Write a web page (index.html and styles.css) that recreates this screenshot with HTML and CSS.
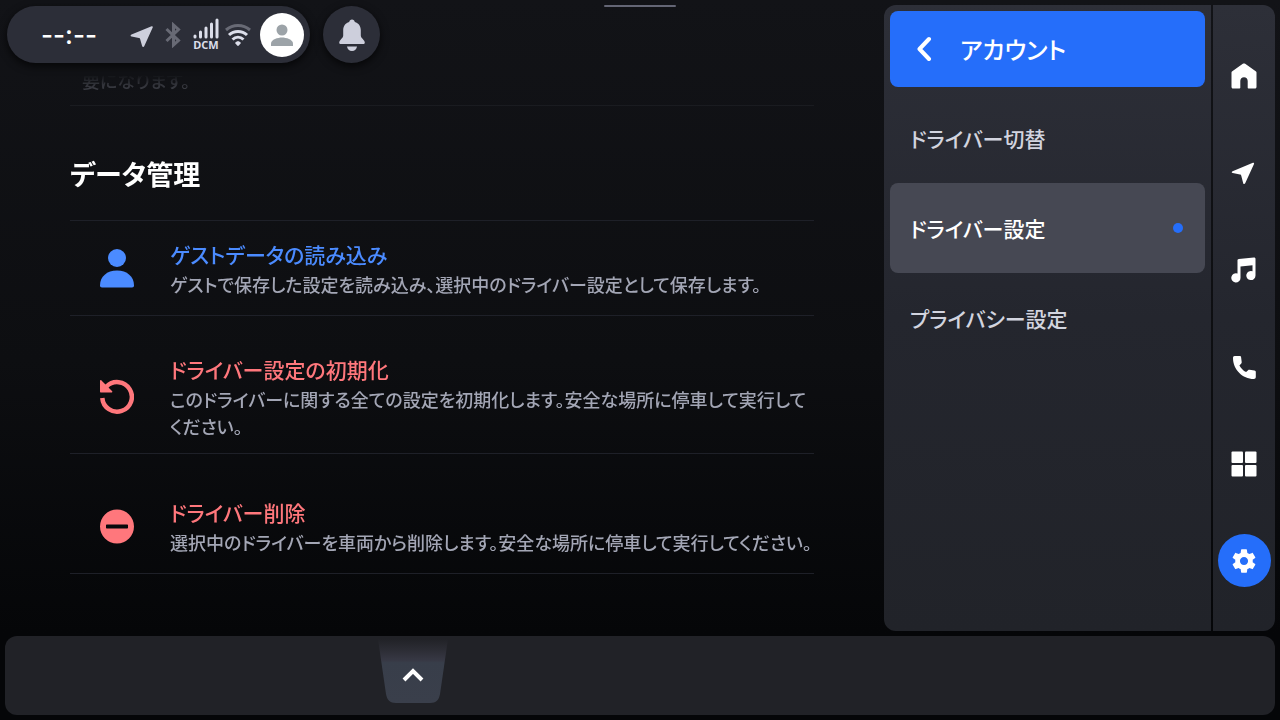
FILE: index.html
```html
<!DOCTYPE html>
<html lang="ja">
<head>
  <meta charset="UTF-8">
  <meta name="viewport" content="width=device-width, initial-scale=1.0">
  <title>ドライバー設定</title>
  <link rel="stylesheet" href="styles.css">
</head>
<body>
  <div class="drag-handle"></div>

  <div class="screen">
    <main class="main">
      <header class="status-bar">
        <div class="status-pill">
          <span class="clock">--:--</span>
          <div class="status-icons">
            <svg class="icon-location" width="24" height="24" viewBox="0 0 24 24"><path d="M22.600 3.300 2.500 11.600c-1.300.6-1.200 1.700.1 2l7.300 1.300c.7.100 1 .4 1.200 1.100l2 7c.4 1.300 1.600 1.300 2.100.2l8.500-18.700c.4-.8-.2-1.500-1.100-1.200z"/></svg>
            <svg class="icon-bluetooth" width="16" height="26" viewBox="0 0 16 26"><path d="M1.500 7 13.500 18.500 8.500 23V3l5 4.500L1.500 19"/></svg>
            <div class="signal">
              <svg width="26" height="21" viewBox="0 0 26 21"><path d="M2 18v1M7.500 14v5M13 10v9M18.500 6v13M24 2v17"/></svg>
              <span>DCM</span>
            </div>
            <svg class="icon-wifi" width="28" height="24" viewBox="0 0 28 24">
              <path class="weak" d="M2 7c7-6 17-6 24 0"/>
              <path d="M5 12c5-4.800 13-4.800 18 0M8.500 16.500c3.300-3 7.700-3 11 0"/>
              <path class="dot" d="M11 20c1.800-2.200 4.200-2.200 6 0l-2.200 2.500c-.5.500-1.100.5-1.600 0z"/>
            </svg>
          </div>
          <button class="avatar" aria-label="プロフィール">
            <svg width="44" height="44" viewBox="0 0 44 44"><circle cx="22" cy="17" r="5.500"/><path d="M11 33v-2.500c0-4 7-6 11-6s11 2 11 6V33z"/></svg>
          </button>
        </div>
        <button class="bell" aria-label="通知">
          <svg width="30" height="36" viewBox="0 0 30 36"><path d="M15 2.500c1.500 0 2.600 1 2.800 2.400 3.900 1.200 6 4.300 6 8.300v5.300c0 3 4 4.200 4 7.300 0 .7-.4 1.200-1 1.200H3.200c-.6 0-1-.5-1-1.200 0-3.100 4-4.300 4-7.300v-5.300c0-4 2.100-7.100 6-8.300.2-1.400 1.300-2.400 2.800-2.400zM10 29.500h10c-.3 2.600-2.300 4.500-5 4.500s-4.700-1.900-5-4.500z"/></svg>
        </button>
      </header>

      <section class="content">
        <p class="previous-note">要になります。</p>
        <h1 class="section-title">データ管理</h1>

        <button class="row row-import">
          <svg class="row-icon" width="34" height="40" viewBox="0 0 34 40"><circle cx="17" cy="9" r="9"/><path d="M0 36.500C0 27.500 7 21.500 17 21.500s17 6 17 15c0 1.300-.7 2-2 2H2c-1.300 0-2-.7-2-2z"/></svg>
          <span class="row-text">
            <span class="row-title">ゲストデータの読み込み</span>
            <span class="row-desc">ゲストで保存した設定を読み込み、選択中のドライバー設定として保存します。</span>
          </span>
        </button>

        <button class="row row-reset">
          <svg class="row-icon" width="34" height="36" viewBox="0 0 34 36"><path d="M2.300 19A14.800 14.800 0 1 0 6.500 7.500" fill="none" stroke="currentColor" stroke-width="4.500"/><path d="M0 2c0-1 .8-1.300 1.500-.6L12 12c.7.700.3 1.600-.6 1.600H1c-.6 0-1-.4-1-1z"/></svg>
          <span class="row-text">
            <span class="row-title">ドライバー設定の初期化</span>
            <span class="row-desc">このドライバーに関する全ての設定を初期化します。安全な場所に停車して実行してください。</span>
          </span>
        </button>

        <button class="row row-delete">
          <svg class="row-icon" width="34" height="36" viewBox="0 0 34 36"><path fill-rule="evenodd" d="M17 .5a17 17 0 1 0 0 34 17 17 0 0 0 0-34zM7 15.500h20c.6 0 1 .4 1 1v2c0 .6-.4 1-1 1H7c-.6 0-1-.4-1-1v-2c0-.6.400-1 1-1z"/></svg>
          <span class="row-text">
            <span class="row-title">ドライバー削除</span>
            <span class="row-desc">選択中のドライバーを車両から削除します。安全な場所に停車して実行してください。</span>
          </span>
        </button>
      </section>
    </main>

    <aside class="side">
      <nav class="menu">
        <button class="menu-back">
          <svg width="16" height="26" viewBox="0 0 16 26"><path d="M13 4 3.500 14l9.500 10"/></svg>
          <span>アカウント</span>
        </button>
        <a class="menu-item" href="#switch">ドライバー切替</a>
        <a class="menu-item active" href="#driver">ドライバー設定</a>
        <a class="menu-item" href="#privacy">プライバシー設定</a>
      </nav>

      <nav class="rail">
        <a class="rail-btn" href="#home" aria-label="ホーム">
          <svg width="26" height="26" viewBox="0 0 26 26"><path d="M11.800.8 1.300 8.200C.8 8.600.5 9 .5 9.600V24c0 .8.600 1.500 1.500 1.500h6.500c.5 0 .8-.3.800-.8V18c0-2.300 1.500-3.800 3.700-3.800s3.700 1.500 3.700 3.800v6.700c0 .5.300.8.800.8H24c.9 0 1.500-.7 1.500-1.500V9.600c0-.6-.3-1-.8-1.400L14.200.8c-.8-.5-1.600-.5-2.400 0z"/></svg>
        </a>
        <a class="rail-btn" href="#map" aria-label="ナビ">
          <svg width="26" height="26" viewBox="0 0 26 26"><path d="M21.900 2.800 1.600 11.200c-1.200.5-1.100 1.600.1 1.900l7.300 1.300c.7.100 1 .4 1.200 1.100l2 7.700c.3 1.200 1.500 1.200 2 .1l8.800-19.300c.4-.8-.3-1.500-1.100-1.200z"/></svg>
        </a>
        <a class="rail-btn" href="#music" aria-label="オーディオ">
          <svg width="26" height="26" viewBox="0 0 26 26"><path d="M6.500 3.300c0-.8.500-1.300 1.300-1.400L22.900.4c.9-.1 1.600.5 1.600 1.400V18.500a4.600 4.600 0 1 1-3-4.300V8.200L9.500 9.400v11.500a4.600 4.600 0 1 1-3-4.300z"/></svg>
        </a>
        <a class="rail-btn" href="#phone" aria-label="電話">
          <svg width="26" height="26" viewBox="0 0 26 26"><path d="M3.700 2h5c.8 0 1.300.5 1.400 1.200l.6 4.800c.1.500-.1 1-.4 1.400l-1.900 2c1.600 2.900 3.800 5.100 6.700 6.700l2-1.900c.4-.4.900-.5 1.400-.4l5 .6c.8.100 1.300.7 1.300 1.400V23c0 1.200-.8 2-2 2C11.500 25 2 15.500 2 4c0-1.200.5-2 1.700-2z"/></svg>
        </a>
        <a class="rail-btn" href="#apps" aria-label="アプリ">
          <svg width="26" height="26" viewBox="0 0 26 26"><rect x=".5" y=".5" width="11.500" height="11.500" rx="1"/><rect x="14" y=".5" width="11.500" height="11.500" rx="1"/><rect x=".5" y="14" width="11.500" height="11.500" rx="1"/><rect x="14" y="14" width="11.500" height="11.500" rx="1"/></svg>
        </a>
        <a class="rail-btn active" href="#settings" aria-label="設定">
          <svg width="28" height="28" viewBox="0 0 24 24"><path d="M19.430 12.980c.04-.32.070-.64.070-.98s-.03-.66-.07-.98l2.110-1.650c.19-.15.240-.42.120-.64l-2-3.460c-.12-.22-.39-.3-.61-.22l-2.490 1c-.52-.4-1.080-.73-1.690-.98l-.38-2.650C14.460 2.180 14.250 2 14 2h-4c-.25 0-.46.180-.49.420l-.38 2.650c-.61.250-1.170.590-1.690.980l-2.490-1c-.23-.09-.49 0-.61.220l-2 3.460c-.13.220-.07.490.120.640l2.110 1.650c-.04.320-.07.650-.07.980s.03.660.070.980l-2.110 1.650c-.19.150-.24.420-.12.640l2 3.460c.12.220.39.300.61.220l2.490-1c.52.400 1.080.730 1.690.980l.38 2.650c.03.240.24.420.490.420h4c.25 0 .46-.18.490-.42l.38-2.650c.61-.25 1.170-.59 1.690-.98l2.490 1c.23.090.49 0 .61-.22l2-3.460c.12-.22.070-.49-.12-.64l-2.110-1.650zM12 15.500c-1.930 0-3.500-1.570-3.500-3.500s1.570-3.500 3.500-3.500 3.500 1.570 3.500 3.500-1.570 3.500-3.500 3.500z"/></svg>
        </a>
      </nav>
    </aside>

    <footer class="dock">
      <button class="dock-tab" aria-label="開く">
        <svg width="70" height="64" viewBox="0 0 70 64">
          <defs>
            <linearGradient id="tabFill" x1="0" y1="0" x2="0" y2="1">
              <stop offset="0" stop-color="#36363f" stop-opacity="0"/>
              <stop offset=".33" stop-color="#373844"/>
              <stop offset=".37" stop-color="#383e4a"/>
              <stop offset="1" stop-color="#3a3f4b"/>
            </linearGradient>
          </defs>
          <path fill="url(#tabFill)" d="M0 0h70l-8 55c-1 6-4 9-10 9H18c-6 0-9-3-10-9z"/>
          <path class="chevron" d="m26 41 9-9 9 9"/>
        </svg>
      </button>
    </footer>
  </div>
</body>
</html>
```
FILE: styles.css
```css
* {
  margin: 0;
  padding: 0;
  box-sizing: border-box;
}

body {
  min-height: 100vh;
  font-family: "Noto Sans CJK JP", sans-serif;
  font-feature-settings: "palt";
  background: linear-gradient(180deg, #121317 0%, #0d0e11 50%, #050608 88%);
  color: #fff;
}

button {
  border: none;
  background: none;
  color: inherit;
  font: inherit;
  font-feature-settings: inherit;
  text-align: left;
  cursor: pointer;
}

a {
  color: inherit;
  text-decoration: none;
}

svg {
  display: block;
  fill: currentColor;
  flex-shrink: 0;
}

.drag-handle {
  position: absolute;
  top: 5px;
  left: 50%;
  width: 72px;
  height: 2px;
  margin-left: -36px;
  border-radius: 1px;
  background: #646675;
}

.screen {
  min-height: 100vh;
  padding: 5px;
  display: grid;
  grid-template-columns: 1fr auto;
  grid-template-rows: 1fr auto;
  gap: 5px;
}

.main {
  min-width: 0;
  display: flex;
  flex-direction: column;
}

/* status bar */

.status-bar {
  display: flex;
  gap: 13px;
  padding: 1px 2px 0;
}

.status-pill {
  height: 57px;
  padding: 0 6px 0 34px;
  display: flex;
  align-items: center;
  border-radius: 29px;
  background: #2c2e38;
  box-shadow: 0 3px 8px rgba(0, 0, 0, 0.7);
}

.clock {
  width: 88px;
  font-family: Inter, sans-serif;
  font-size: 26px;
  font-weight: 500;
  line-height: 30px;
}

.status-icons {
  display: flex;
  align-items: center;
  gap: 12px;
  color: #cdcfdc;
}

.icon-bluetooth {
  fill: none;
  stroke: #686a75;
  stroke-width: 3;
}

.signal {
  width: 26px;
  margin-right: -7px;
  color: #dcdeea;
}

.signal svg {
  stroke: currentColor;
  stroke-width: 3;
  stroke-linecap: round;
}

.signal span {
  display: block;
  font-family: "Noto Sans", sans-serif;
  font-size: 11px;
  font-weight: 700;
  line-height: 12px;
  text-align: center;
}

.icon-wifi {
  fill: none;
  stroke: #dcdeea;
  stroke-width: 3;
}

.icon-wifi .weak {
  stroke: #686a75;
}

.icon-wifi .dot {
  fill: #dcdeea;
  stroke: none;
}

.avatar {
  margin-left: 8px;
  border-radius: 50%;
  background: #fff;
  color: #9ca3a8;
}

.bell {
  width: 57px;
  height: 57px;
  display: flex;
  align-items: center;
  justify-content: center;
  border-radius: 50%;
  background: #2c2e38;
  color: #cdcfdc;
  box-shadow: 0 3px 8px rgba(0, 0, 0, 0.7);
}

/* content */

.content {
  flex: 1;
  padding: 4px 65px 0;
  overflow: hidden;
  -webkit-mask-image: linear-gradient(180deg, transparent 12px, rgba(0, 0, 0, 0.2) 20px, rgba(0, 0, 0, 0.6) 50px, #000 80px);
  mask-image: linear-gradient(180deg, transparent 12px, rgba(0, 0, 0, 0.2) 20px, rgba(0, 0, 0, 0.6) 50px, #000 80px);
}

.previous-note {
  height: 39px;
  padding-left: 12px;
  border-bottom: 1px solid #23252c;
  color: #a3a6b5;
  font-size: 18px;
  font-weight: 500;
  line-height: 27px;
}

.section-title {
  padding: 48px 0 26px;
  border-bottom: 1px solid #1e2028;
  font-size: 27px;
  font-weight: 700;
  line-height: 40px;
}

.row {
  width: 100%;
  padding: 18px 0 17px 30px;
  display: flex;
  align-items: center;
  gap: 36px;
  border-bottom: 1px solid #1e2028;
  color: #ff777c;
}

.row-import {
  color: #4b8bff;
}

.row-reset {
  padding-top: 38px;
  padding-bottom: 13px;
}

.row-delete {
  padding-top: 43px;
}

.row-title,
.row-desc {
  display: block;
}

.row-title {
  margin-bottom: 2px;
  font-size: 21px;
  font-weight: 500;
  line-height: 30px;
}

.row-desc {
  color: #a3a6b5;
  font-size: 18px;
  font-weight: 500;
  line-height: 27px;
}

/* right side */

.side {
  display: flex;
  gap: 2px;
}

.menu,
.rail {
  background: linear-gradient(180deg, #2d2f38 0%, #24262e 50%, #212329 100%);
}

.menu {
  width: 327px;
  padding: 6px;
  border-radius: 12px 0 0 12px;
}

.menu-back {
  width: 100%;
  height: 76px;
  margin-bottom: 6px;
  padding: 0 26px 2px;
  display: flex;
  align-items: center;
  gap: 28px;
  border-radius: 8px;
  background: #256efa;
  font-size: 24px;
  font-weight: 500;
}

.menu-back svg {
  fill: none;
  stroke: currentColor;
  stroke-width: 4;
  stroke-linecap: round;
  stroke-linejoin: round;
}

.menu-item {
  height: 90px;
  padding: 0 22px 0 20px;
  display: flex;
  align-items: center;
  justify-content: space-between;
  border-radius: 8px;
  color: #d2d4df;
  font-size: 21px;
  font-weight: 500;
}

.menu-item.active {
  background: #464853;
  color: #fff;
}

.menu-item.active::after {
  content: "";
  width: 10px;
  height: 10px;
  border-radius: 50%;
  background: #256efa;
}

.rail {
  width: 62px;
  padding-top: 44px;
  display: flex;
  flex-direction: column;
  align-items: center;
  gap: 44px;
  border-radius: 0 12px 12px 0;
}

.rail-btn {
  width: 53px;
  height: 53px;
  display: flex;
  align-items: center;
  justify-content: center;
  border-radius: 50%;
}

.rail-btn.active {
  background: #256efa;
}

/* bottom dock */

.dock {
  grid-column: 1 / -1;
  height: 79px;
  padding-left: 373px;
  display: flex;
  align-items: flex-start;
  border-radius: 12px;
  background: #212227;
}

.dock-tab {
  padding-top: 3px;
}

.dock-tab .chevron {
  fill: none;
  stroke: #fff;
  stroke-width: 4;
}
```
